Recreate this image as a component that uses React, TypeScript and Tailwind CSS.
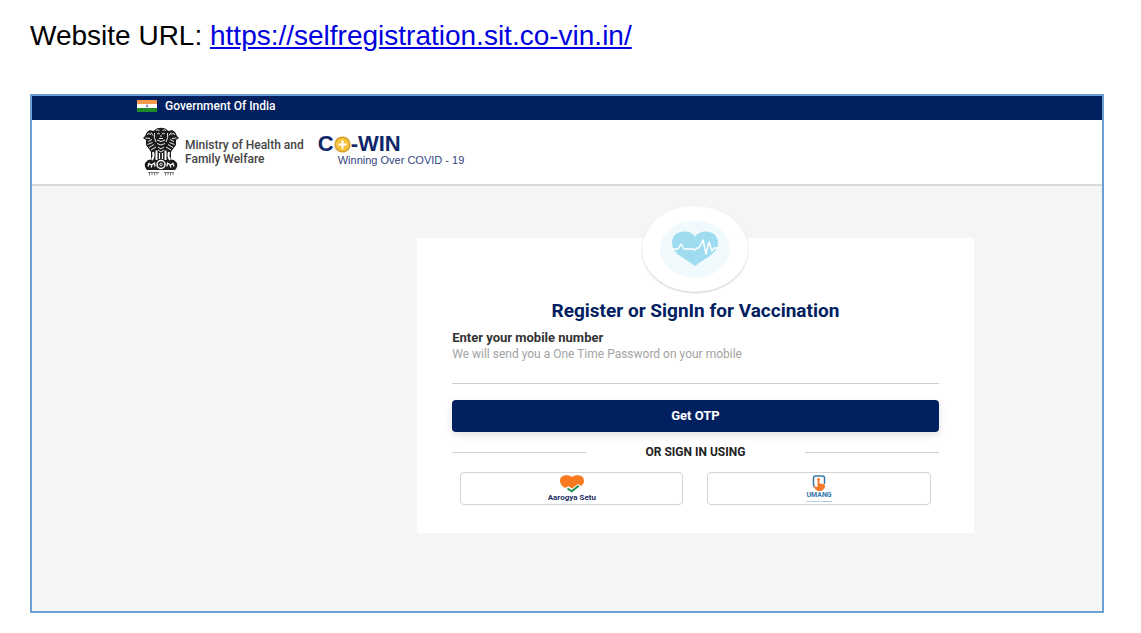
import React from "react";

function IndiaFlag() {
  return (
    <svg width="20" height="12" viewBox="0 0 20 12" aria-hidden="true">
      <rect width="20" height="4" fill="#f59a4c" />
      <rect y="4" width="20" height="4" fill="#fff" />
      <rect y="8" width="20" height="4" fill="#1f8a2c" />
      <circle cx="10" cy="6" r="1.4" fill="#8d98cc" />
    </svg>
  );
}

function Emblem() {
  return (
    <svg width="38" height="50" viewBox="0 0 38 50" aria-hidden="true">
      <g fill="#1b1b1b">
        <path d="M13 3C15 0 23 0 25 3L27 4 30 3 33 5 35 9 37 11 34 13 34 18 31 22 29 25 29 33H9L9 25 7 22 4 18 4 13 1 11 3 9 5 5 8 3 11 4Z" />
        <path d="M6 33Q19 30 32 33L35 36Q36 40 33 43H5Q2 40 3 36Z" />
      </g>
      <g fill="none" stroke="#fff" strokeWidth=".9">
        <path d="M14 3.500q2-1.500 3.500 0M20.500 3.500q2-1.500 3.500 0M15 7q1.500-1.500 3 0M20 7q1.500-1.500 3 0M17 11.500h4M19 8v2M15 13q4 3 8 0M12.500 6q-1 5 1.500 9M25.500 6q1 5-1.500 9M15 16.500q4 3 8 0" />
        <path d="M5 7.500q2-2 4 0M3.500 11l4.500.5M6 14.500l4-2M9 5.500l2 3M29 7.500q2-2 4 0M34.500 11l-4.500.5M32 14.500l-4-2M29 5.500l-2 3" />
        <path d="M5.500 17.500l5-2M7 20.500l5-3M9 23l5-3M32.500 17.500l-5-2M31 20.500l-5-3M29 23l-5-3M16 20l3 2 3-2M16 23l3 2 3-2" />
        <path d="M11 25q1.500 4-1 8M14.500 23.500V33M23.500 23.500V33M27 25q-1.500 4 1 8" strokeWidth="2" />
        <path d="M17.500 26v6M20.500 26v6" strokeWidth="1.200" />
      </g>
      <g fill="none" stroke="#fff">
        <circle cx="19" cy="37.500" r="4" strokeWidth="1.500" />
        <circle cx="19" cy="37.500" r="1.300" strokeWidth=".9" />
        <path d="M6 39.500l1-3 2.500 1.500 3-2 .5 3.500M9 40.500l1-2M25 39.500l.5-3.500 3 2 2.500-1.500 1 3M29 40.500l-1-2" strokeWidth="1.300" />
      </g>
      <path d="M6 45.500h11M7.500 46v2.500M10 46v2M12.500 46v2.500M15 46v2M22 45.500h10M23.500 46v2.500M26 46v2M28.500 46v2.500M31 46v2" stroke="#555" strokeWidth=".8" fill="none" />
    </svg>
  );
}

function PlusCoin() {
  return (
    <svg width="17" height="17" viewBox="0 0 16 16" aria-hidden="true">
      <circle cx="8" cy="8" r="7" fill="#f6c23a" stroke="#d39a2a" strokeWidth="1.200" />
      <path d="M8 4v8M4 8h8" stroke="#fff" strokeWidth="2" />
    </svg>
  );
}

function HeartPulse() {
  return (
    <svg width="70" height="58" viewBox="0 0 70 58" aria-hidden="true">
      <ellipse cx="35" cy="29" rx="35" ry="28.500" fill="#f0f9fc" />
      <path d="M35 17C31 9 12 9 12 23C12 34 25 38 35 46C45 38 58 34 58 23C58 9 39 9 35 17Z" fill="#9fdcf0" />
      <path d="M12 29h6l3-5 3 5h9l2 1 2-2h2l4-8 3 14 3-12 3 9 2-3h4" fill="none" stroke="#fff" strokeWidth="1.400" strokeLinejoin="round" />
    </svg>
  );
}

function AarogyaIcon() {
  return (
    <svg width="24" height="18" viewBox="0 0 24 18" aria-hidden="true">
      <path d="M12 1.800C8-.8 0-.5 0 6C0 9 2 11 5 13L8.500 11.200 12 13.500 18 9 21 11C23 9.500 24 8 24 6C24-.5 16-.8 12 1.800Z" fill="#f9791f" />
      <path d="M7.500 13.500l4.200 2.800 7-5.500" fill="none" stroke="#17914b" strokeWidth="2" />
    </svg>
  );
}

function UmangIcon() {
  return (
    <svg width="14" height="16" viewBox="0 0 14 16" aria-hidden="true">
      <path d="M2.500 12Q1.500 11.500 1.500 10V3Q1.500 1 3.500 1h7Q12.500 1 12.500 3v6" fill="none" stroke="#3577ab" strokeWidth="1.500" />
      <circle cx="6.500" cy="4.500" r="1.400" fill="#f27a2a" />
      <path d="M5.500 5.500h2V8.500l4 .5Q13.500 9.500 13 12T9.500 16H6Q3 15 1.500 11L5.500 12Z" fill="#f27a2a" />
    </svg>
  );
}

export default function App() {
  return (
    <div className="flex min-h-screen flex-col bg-white px-[30px] pt-4 pb-5 font-['Liberation_Sans',Arial,sans-serif]">
      <p className="mb-[38px] text-[28px] leading-10 text-black">
        Website URL:{" "}
        <a href="https://selfregistration.sit.co-vin.in/" className="text-[#0000e0] underline">
          https://selfregistration.sit.co-vin.in/
        </a>
      </p>

      <div className="mr-[7px] flex grow flex-col border-2 border-[#6ba0d0] bg-[#f5f5f5] font-[Roboto,sans-serif]">
        <div className="flex h-6 items-center gap-2 bg-[#00205f] pb-1 pl-[105px] text-xs font-medium text-white">
          <IndiaFlag />
          <span>Government Of India</span>
        </div>

        <header className="flex h-[66px] items-center border-b-2 border-[#d9d9d9] bg-white pl-[110px]">
          <Emblem />
          <p className="ml-[5px] text-xs leading-[14px] font-medium text-[#444]">
            Ministry of Health and
            <br />
            Family Welfare
          </p>
          <div className="ml-[14px] pb-1 font-['Liberation_Sans',Arial,sans-serif]">
            <div className="flex items-center text-[22px] leading-5 font-bold text-[#10286a]">
              C<PlusCoin />
              <span>-WIN</span>
            </div>
            <p className="pl-5 text-[11px] leading-3 text-[#32457f]">Winning Over COVID - 19</p>
          </div>
        </header>

        <main className="pt-[52px] pr-[12%] pb-10 pl-[36%]">
          <form className="flex flex-col bg-white px-[35px] pb-7" onSubmit={(e) => e.preventDefault()}>
            <div className="-mt-8 flex h-[86px] w-[106px] items-center justify-center self-center rounded-[50%] bg-white shadow-[0_1px_2px_rgba(0,0,0,0.2)]">
              <HeartPulse />
            </div>
            <h1 className="mt-[7px] text-center text-[19px] leading-6 font-bold text-[#00205f]">
              Register or SignIn for Vaccination
            </h1>
            <label htmlFor="mobile" className="mt-[7px] text-[13px] leading-4 font-bold text-[#333]">
              Enter your mobile number
            </label>
            <p id="mobile-hint" className="text-xs leading-4 text-[#a3a3a3]">
              We will send you a One Time Password on your mobile
            </p>
            <input
              id="mobile"
              type="tel"
              aria-describedby="mobile-hint"
              className="h-[22px] border-b border-[#cfcfcf] bg-transparent text-sm outline-none"
            />
            <button
              type="submit"
              className="mt-4 h-8 rounded bg-[#00205f] text-[13px] font-bold text-white shadow-[0_3px_8px_rgba(0,0,0,0.12)]"
            >
              Get OTP
            </button>
            <div className="mt-3 flex items-center justify-between text-xs leading-4 font-bold text-[#222]">
              <span className="w-[134px] border-t border-[#d0d0d0]" />
              OR SIGN IN USING
              <span className="w-[134px] border-t border-[#d0d0d0]" />
            </div>
            <div className="mt-3 grid grid-cols-2 gap-6 px-2">
              <button
                type="button"
                className="flex h-[33px] flex-col items-center justify-center rounded border border-[#d4d4d4] text-[8px] leading-[10px] font-bold text-[#1d2f66]"
              >
                <AarogyaIcon />
                Aarogya Setu
              </button>
              <button
                type="button"
                className="flex h-[33px] flex-col items-center justify-center rounded border border-[#d4d4d4] text-[#3577ab]"
              >
                <UmangIcon />
                <span className="text-[7px] leading-[8px] font-bold">UMANG</span>
                <span className="text-[2px] leading-[4px]">THE POWER OF INNOVATION</span>
              </button>
            </div>
          </form>
        </main>
      </div>
    </div>
  );
}
